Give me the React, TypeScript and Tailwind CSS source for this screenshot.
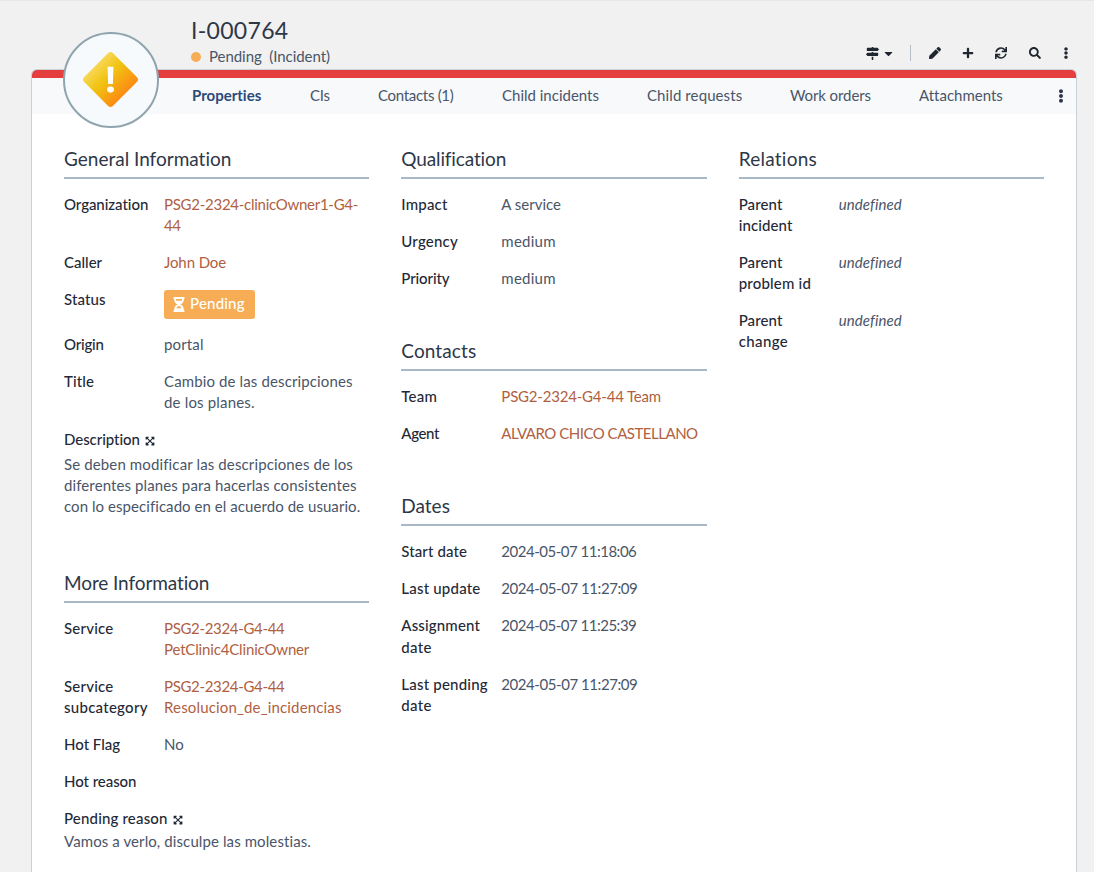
import { Fragment, type ReactNode } from "react";
import { FaMapSigns, FaCaretDown, FaPen, FaPlus, FaSync, FaSearch, FaEllipsisV, FaExpandArrowsAlt, FaHourglassHalf } from "react-icons/fa";

type Line = [string, string?];
type Row = { label: Line[]; value?: Line[]; kind?: "link" | "undefined" | "badge"; leading?: string };

const lines = (items: Line[]) =>
  items.map(([text, tracking = ""], i) => (
    <Fragment key={i}>
      <span className={tracking}>{text}</span>
      {i < items.length - 1 && <br />}
    </Fragment>
  ));

function Field({ label, value = [], kind, leading = "" }: Row) {
  const tone = kind === "link" ? "text-[#b0603f]" : kind === "undefined" ? "italic text-[#4a5568]" : "text-[#4a5568]";
  return (
    <div className="flex">
      <dt className={`w-[100px] shrink-0 whitespace-nowrap font-medium text-[#1f2937] ${leading}`}>{lines(label)}</dt>
      <dd className={`whitespace-nowrap ${tone}`}>
        {kind === "badge" ? (
          <span className="-mb-px mt-px flex h-[29px] w-[91px] items-center gap-[5px] rounded-[3px] bg-[#f6ad55] pl-[9px] font-medium text-white">
            <FaHourglassHalf size={15} className="w-[12px]" />
            <span className="-mt-[2px] tracking-[0.2px]">Pending</span>
          </span>
        ) : (
          lines(value)
        )}
      </dd>
    </div>
  );
}

function Section({ title, tracking = "", rows, children }: { title: string; tracking?: string; rows: Row[]; children?: ReactNode }) {
  return (
    <section>
      <h2 className={`h-[33px] border-b-2 border-[#a9b8c6] text-[19px] leading-[25px] text-[#2d3748] ${tracking}`}>{title}</h2>
      <dl className="mt-[15px] flex flex-col gap-4 pb-px">
        {rows.map((row, i) => (
          <Field key={i} {...row} />
        ))}
        {children}
      </dl>
    </section>
  );
}

const general: Row[] = [
  { label: [["Organization", "tracking-[-0.05px]"]], value: [["PSG2-2324-clinicOwner1-G4-", "tracking-[-0.27px]"], ["44", "tracking-[-0.4px]"]], kind: "link" },
  { label: [["Caller"]], value: [["John Doe", "tracking-[-0.1px]"]], kind: "link" },
  { label: [["Status", "tracking-[0.1px]"]], kind: "badge" },
  { label: [["Origin", "tracking-[-0.2px]"]], value: [["portal", "tracking-[0.15px]"]] },
  { label: [["Title", "tracking-[0.1px]"]], value: [["Cambio de las descripciones", "tracking-[0.13px]"], ["de los planes.", "tracking-[0.17px]"]] },
];
const more: Row[] = [
  { label: [["Service", "tracking-[0.2px]"]], value: [["PSG2-2324-G4-44", "tracking-[-0.33px]"], ["PetClinic4ClinicOwner", "tracking-[-0.16px]"]], kind: "link" },
  {
    label: [["Service", "tracking-[0.2px]"], ["subcategory", "tracking-[0.27px]"]],
    value: [["PSG2-2324-G4-44", "tracking-[-0.33px]"], ["Resolucion_de_incidencias", "tracking-[0.16px]"]],
    kind: "link",
  },
  { label: [["Hot Flag"]], value: [["No"]] },
  { label: [["Hot reason", "tracking-[-0.05px]"]] },
];
const qualification: Row[] = [
  { label: [["Impact", "tracking-[0.2px]"]], value: [["A service"]] },
  { label: [["Urgency", "tracking-[0.2px]"]], value: [["medium", "tracking-[0.25px]"]] },
  { label: [["Priority", "tracking-[-0.1px]"]], value: [["medium", "tracking-[0.25px]"]] },
];
const contacts: Row[] = [
  { label: [["Team", "tracking-[0.2px]"]], value: [["PSG2-2324-G4-44 Team", "tracking-[-0.2px]"]], kind: "link" },
  { label: [["Agent", "tracking-[-0.4px]"]], value: [["ALVARO CHICO CASTELLANO", "tracking-[-0.48px]"]], kind: "link" },
];
const dates: Row[] = [
  { label: [["Start date", "tracking-[0.1px]"]], value: [["2024-05-07 11:18:06", "tracking-[-0.49px]"]] },
  { label: [["Last update", "tracking-[0.2px]"]], value: [["2024-05-07 11:27:09", "tracking-[-0.44px]"]] },
  { label: [["Assignment", "tracking-[0.15px]"], ["date", "tracking-[0.3px]"]], value: [["2024-05-07 11:25:39", "tracking-[-0.49px]"]], leading: "leading-[21.5px]" },
  { label: [["Last pending", "tracking-[0.2px]"], ["date", "tracking-[0.3px]"]], value: [["2024-05-07 11:27:09", "tracking-[-0.44px]"]] },
];
const relations: Row[] = [
  { label: [["Parent", "tracking-[0.1px]"], ["incident", "tracking-[0.1px]"]], value: [["undefined", "tracking-[0.1px]"]], kind: "undefined" },
  { label: [["Parent", "tracking-[0.1px]"], ["problem id", "tracking-[0.2px]"]], value: [["undefined", "tracking-[0.1px]"]], kind: "undefined" },
  { label: [["Parent", "tracking-[0.1px]"], ["change", "tracking-[0.4px]"]], value: [["undefined", "tracking-[0.1px]"]], kind: "undefined" },
];

const tabs = [
  { name: "Properties", box: "w-[118px] font-bold text-[#2c4a78]" },
  { name: "CIs", box: "w-[68px] tracking-[-0.2px]" },
  { name: "Contacts (1)", box: "w-[124px] tracking-[-0.3px]" },
  { name: "Child incidents", box: "w-[145px]" },
  { name: "Child requests", box: "w-[143px] tracking-[0.1px]" },
  { name: "Work orders", box: "w-[129px] tracking-[-0.1px]" },
  { name: "Attachments", box: "w-[120px]" },
];

export default function App() {
  return (
    <div className="flex h-[872px] w-[1094px] flex-col overflow-hidden border-t border-[#e6e6e6] bg-[#f1f1f1] font-['Lato',sans-serif] text-[15px] leading-[21px] text-[#4a5568] [font-variant-ligatures:none]">
      <header className="flex h-[68px] justify-between pl-[191px] pr-[22px]">
        <div>
          <h1 className="mt-[13px] text-[23px] leading-[32px] tracking-[0.3px] text-[#2d3748]">I-000764</h1>
          <p className="flex items-center">
            <span className="mr-[8px] mt-px size-[10px] rounded-full bg-[#f6ad55]" />
            <span className="whitespace-pre tracking-[-0.05px]">Pending  (Incident)</span>
          </p>
        </div>
        <div className="mt-[43px] flex h-[18px] items-center text-[#1f2630]">
          <FaMapSigns size={13} />
          <FaCaretDown size={13} className="ml-[3px]" />
          <span className="ml-[15px] mr-[18px] h-[16px] w-px bg-[#b5bec8]" />
          <FaPen size={12} className="mr-px" />
          <FaPlus size={12} className="ml-[20px]" />
          <FaSync size={12} className="ml-[21px]" />
          <FaSearch size={12} className="ml-[22px]" />
          <FaEllipsisV size={12} className="ml-[19px]" />
        </div>
      </header>
      <main className="ml-[31px] w-[1046px] flex-1 rounded-t-[6px] border border-b-0 border-[#c9d0d6] bg-white">
        <div className="h-[8px] rounded-t-[5px] bg-[#e53e3e]" />
        <nav className="relative flex h-[36px] items-center bg-[#f7f9fb] pl-[160px] pr-[8px]">
          <div className="absolute left-[31px] top-[-46px] flex size-[96px] items-center justify-center rounded-full border-2 border-[#90a4ae] bg-[#f7fafc]">
            <svg viewBox="0 0 58 58" className="mb-px mr-px size-[57px]">
              <defs>
                <linearGradient id="warn" x1="0.2" y1="0.2" x2="0.8" y2="0.8" gradientUnits="objectBoundingBox">
                  <stop offset="0" stopColor="#f9dc62" />
                  <stop offset="0.4" stopColor="#f1c413" />
                  <stop offset="1" stopColor="#fd8412" />
                </linearGradient>
              </defs>
              <path d="M26.6 2Q29 0 31.4 2L56 26.6Q58 29 56 31.4L31.4 56Q29 58 26.6 56L2 31.4Q0 29 2 26.6Z" fill="url(#warn)" />
              <path d="M26 16h6l-.6 17.5h-4.8z" fill="#fff" />
              <ellipse cx="29" cy="39.3" rx="3.5" ry="3.1" fill="#fff" />
            </svg>
          </div>
          {tabs.map((tab) => (
            <span key={tab.name} className={`shrink-0 whitespace-nowrap pb-[2px] ${tab.box}`}>
              {tab.name}
            </span>
          ))}
          <FaEllipsisV size={14} className="ml-auto text-[#2d3748]" />
        </nav>
        <div className="grid grid-cols-3 gap-8 px-8 pt-8">
          <div className="flex flex-col gap-[52px]">
            <Section title="General Information" rows={general}>
              <div>
                <dt className="flex items-center font-medium text-[#1f2937]">
                  <span className="tracking-[-0.05px]">Description</span>
                  <FaExpandArrowsAlt size={10} className="ml-[5px] mt-[2px]" />
                </dt>
                <dd className="mt-1 whitespace-nowrap">
                  {lines([
                    ["Se deben modificar las descripciones de los", "tracking-[0.13px]"],
                    ["diferentes planes para hacerlas consistentes", "tracking-[0.11px]"],
                    ["con lo especificado en el acuerdo de usuario.", "tracking-[0.06px]"],
                  ])}
                </dd>
              </div>
            </Section>
            <Section title="More Information" tracking="tracking-[-0.1px]" rows={more}>
              <div>
                <dt className="flex items-center font-medium text-[#1f2937]">
                  <span className="tracking-[0.17px]">Pending reason</span>
                  <FaExpandArrowsAlt size={10} className="ml-[5px] mt-[2px]" />
                </dt>
                <dd className="mt-[2px] tracking-[0.1px]">Vamos a verlo, disculpe las molestias.</dd>
              </div>
            </Section>
          </div>
          <div className="flex flex-col gap-12">
            <Section title="Qualification" tracking="tracking-[-0.13px]" rows={qualification} />
            <Section title="Contacts" tracking="tracking-[0.1px]" rows={contacts} />
            <Section title="Dates" rows={dates} />
          </div>
          <Section title="Relations" tracking="tracking-[0.25px]" rows={relations} />
        </div>
      </main>
    </div>
  );
}
